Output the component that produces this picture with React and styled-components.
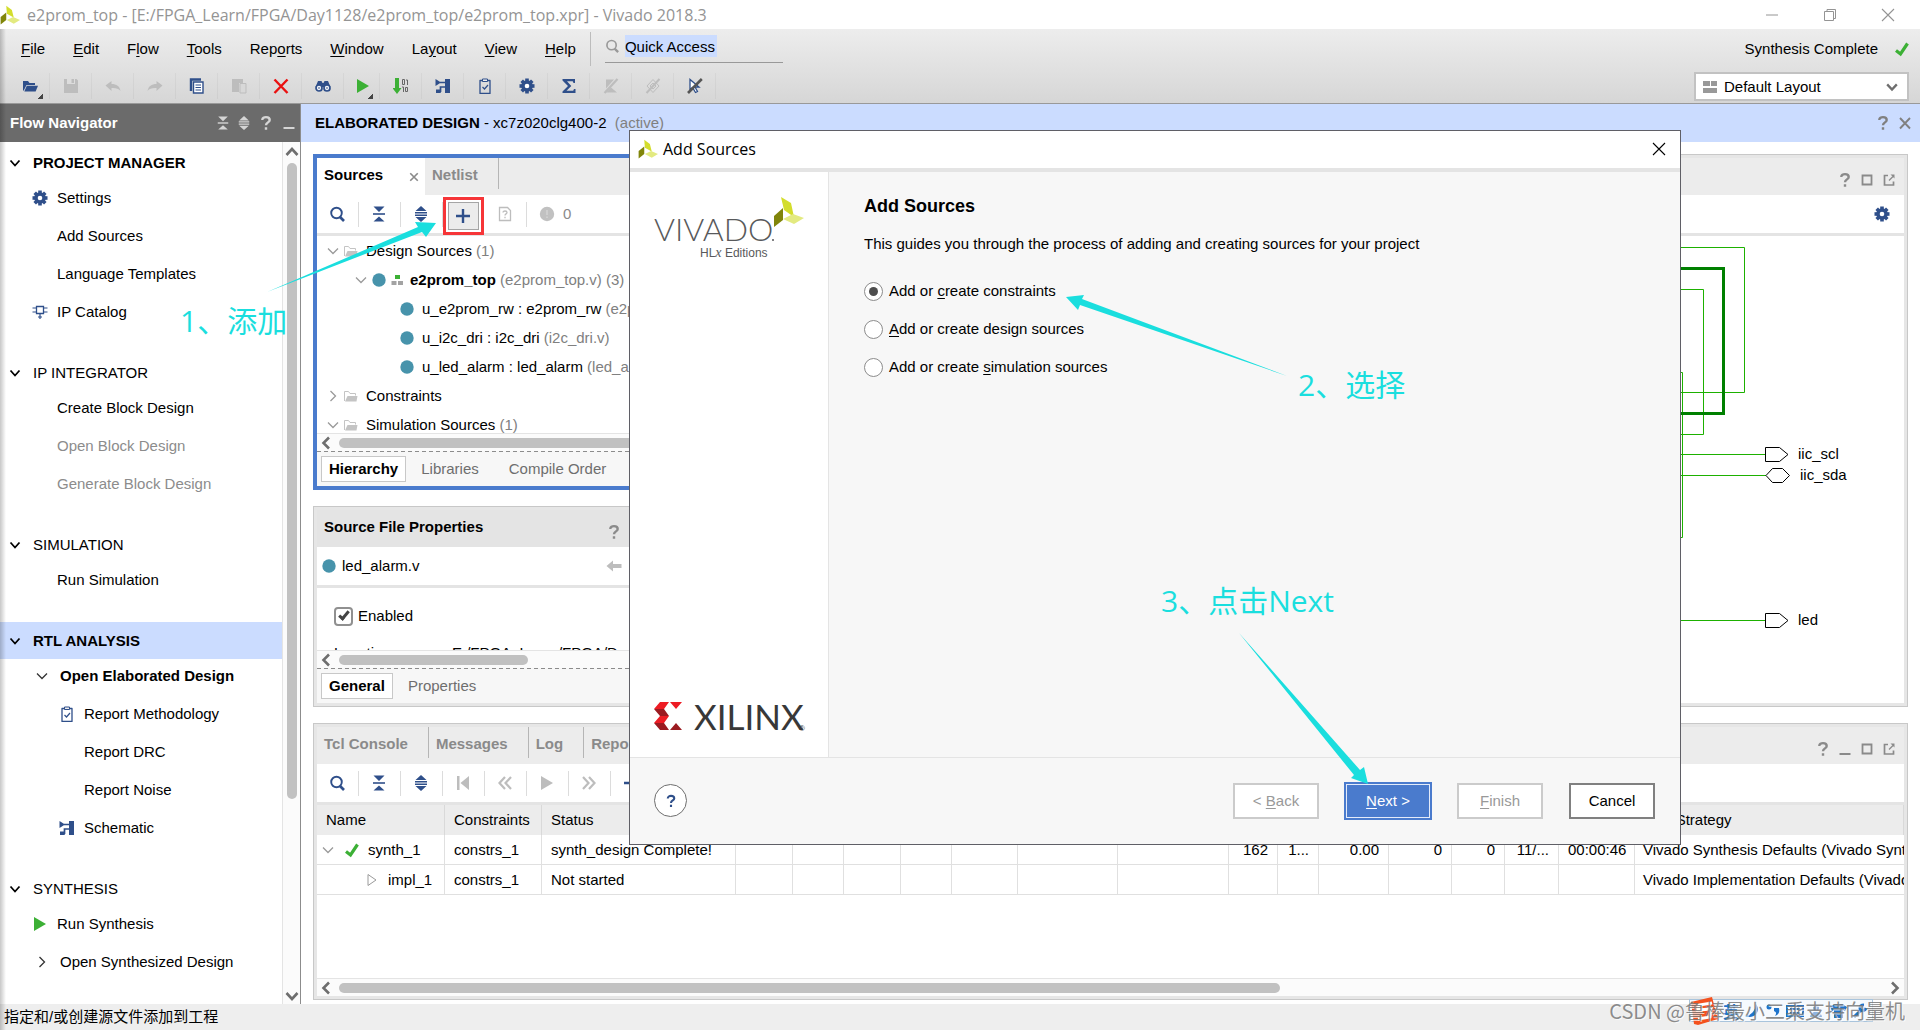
import React from "react";
import styled, { createGlobalStyle, css } from "styled-components";

const color = {
  navy: "#2f4f8a",
  gray: "#9a9a9a",
  pale: "#bdbdbd",
  line: "#e4e4e4",
  bar: "#ececec",
  teal: "#4793ab",
  focus: "#4a7bcd",
  select: "#cbdcff",
  green: "#3cb035",
  note: "#1adede",
};

const GlobalStyle = createGlobalStyle`
  *, *::before, *::after { box-sizing: border-box; }
  body {
    margin: 0;
    background: #fff;
    color: #000;
    font: 15px/20px "Liberation Sans", "Noto Sans CJK SC", sans-serif;
  }
  button, input, select { font: inherit; color: inherit; margin: 0; }
  button { background: none; border: 0; padding: 0; text-align: left; white-space: nowrap; }
  ul { list-style: none; margin: 0; padding: 0; }
  h1, h2, p { margin: 0; font-size: inherit; }
  svg { display: block; flex: none; }
`;

/* ---------- icons ---------- */

const glyphs = {
  open: (
    <>
      <path d="M1 13V3h5l1.500 2H13v2H4.500L2 12z" fill="currentColor" />
      <path d="M4.800 7.800H16L13.600 13.500H2.300z" fill="currentColor" />
    </>
  ),
  save: <path fill="currentColor" fillRule="evenodd" d="M1 1h3v5h8V1h1.500L15 2.500V15H1zM8.500 1H11v4H8.500z" />,
  undo: <path fill="currentColor" d="M0.500 7.500 6.500 3v3c5 0 8 2 9 7-2-2.500-4.500-3.200-9-3v3z" />,
  redo: <path fill="currentColor" d="M15.500 7.500 9.500 3v3c-5 0-8 2-9 7 2-2.500 4.500-3.200 9-3v3z" />,
  copy: (
    <>
      <path d="M2 13V1.500h10" fill="none" stroke="currentColor" strokeWidth="2.400" />
      <path d="M4.500 4h9.500v11H4.500z" fill="#fff" stroke="currentColor" strokeWidth="1.400" />
      <path d="M6.500 7h5.500M6.500 9.500h5.500M6.500 12h5.500" stroke="currentColor" strokeWidth="1.200" />
    </>
  ),
  paste: (
    <>
      <path d="M1 1h11v4H8v9H1z" fill="currentColor" />
      <path d="M9 5.500h6v9.500H9z" fill="#d8d8d8" stroke="currentColor" />
    </>
  ),
  remove: <path d="M1.500 1.500 14.500 15M14.500 1.500 1.500 15" stroke="#ea1111" strokeWidth="2.400" fill="none" />,
  find: (
    <>
      <path fill="currentColor" d="M3 3h3.500l1 2h1l1-2H13l2.500 6h-15z" />
      <circle cx="4" cy="10" r="3" fill="#fff" stroke="currentColor" strokeWidth="1.700" />
      <circle cx="12" cy="10" r="3" fill="#fff" stroke="currentColor" strokeWidth="1.700" />
      <circle cx="4" cy="10" r="1.300" fill="currentColor" opacity=".5" />
      <circle cx="12" cy="10" r="1.300" fill="currentColor" opacity=".5" />
    </>
  ),
  play: <path fill="currentColor" d="M2 1 14 8 2 15z" />,
  playOutline: <path fill="none" stroke="currentColor" d="M4 2.500 12 8l-8 5.500z" />,
  bits: (
    <>
      <path d="M2 0h4v10h2.500L4 16-.500 10H2z" fill={color.green} />
      <path
        fill="none"
        stroke="#666"
        d="M9.500 1.500h2v5h-2zM13 2h1.500v5M9 9h1.500v5M12.500 9.500h2v4h-2z"
      />
    </>
  ),
  schematic: (
    <>
      <path fill="currentColor" d="M.500 1 6 4.500 .500 8zM10 1h5v14h-5z" />
      <path fill="none" stroke="currentColor" strokeWidth="1.700" d="M5 4.500h6M10 9H5.500v5M1 14h5" />
      <path fill="currentColor" d="M1 11.500h4V15H1z" />
    </>
  ),
  clipboard: (
    <>
      <path d="M3 2.500h10v13H3z" fill="none" stroke="currentColor" strokeWidth="1.300" strokeLinejoin="round" />
      <path d="M5.500 1h5v2.500h-5z" fill="#eee" stroke="currentColor" />
      <path d="m5.500 9 2 2 3.500-4" fill="none" stroke="currentColor" strokeWidth="1.200" />
    </>
  ),
  gear: (
    <>
      <g fill="currentColor">
        <circle cx="8" cy="8" r="5.800" />
        {[0, 45, 90, 135].map((a) => (
          <rect key={a} x="6.200" y="0.500" width="3.600" height="15" transform={`rotate(${a} 8 8)`} />
        ))}
      </g>
      <circle cx="8" cy="8" r="2.300" fill="#fff" />
    </>
  ),
  sigma: <path fill="currentColor" d="M1.500 1H14v4h-1.500l-.800-1.800H6L10.300 8 5.500 12.800h6.700L13 11h1.500v4h-13v-1.500L7 8 1.500 2.600z" />,
  flagOff: (
    <>
      <path fill="currentColor" d="M3 1.500h8L3 10.500zM8 9.500l6 5H3z" />
      <path d="M1.500 15 14.500 1" stroke="currentColor" strokeWidth="2.200" />
    </>
  ),
  layerOff: (
    <>
      <path d="M8 1.500 14 8l-6 6.500L2 8zM8 5l3 3-3 3-3-3z" fill="none" stroke="currentColor" />
      <path d="M1.500 15 14.500 1" stroke="currentColor" strokeWidth="2" />
    </>
  ),
  cursorOff: (
    <>
      <path d="M3 1.500v10l2.500-2 3 5 2-1-2.500-4.500H12z" fill="#fff" stroke={color.navy} strokeWidth="1.300" />
      <path d="M1 15 14.800 1" stroke="#555" strokeWidth="2.600" />
    </>
  ),
  search: (
    <>
      <circle cx="7.500" cy="7" r="5.300" fill="none" stroke="currentColor" strokeWidth="1.900" />
      <path d="m11 11 4 4" stroke="currentColor" strokeWidth="2.600" />
    </>
  ),
  collapse: (
    <>
      <path fill="currentColor" d="M2.500 0.500h11L8 6zM2.500 15.500h11L8 10.500z" />
      <path d="M2 8h12" stroke="currentColor" strokeWidth="1.600" />
    </>
  ),
  expand: (
    <>
      <path fill="currentColor" d="M2.500 5h11L8 0zM2.500 11h11L8 16z" />
      <path d="M2 6.800h12M2 9.300h12" stroke="currentColor" strokeWidth="1.400" />
    </>
  ),
  plus: <path d="M8 1v14M1 8h14" stroke="currentColor" strokeWidth="2.400" />,
  help: <path fill="none" stroke="currentColor" strokeWidth="2.400" d="M4.300 5C4.300 1.200 11.700 1.200 11.700 5 11.700 7.500 8 7.300 8 10.300M8 12.200V14.800" />,
  fileHelp: (
    <>
      <path d="M2.500 1.500h8l3 3v10h-11z" fill="none" stroke="currentColor" strokeWidth="1.300" />
      <path d="M6 6.500c0-2 4-2 4 0 0 1.400-2 1.400-2 3M8 10.800V12.300" fill="none" stroke="currentColor" strokeWidth="1.300" />
    </>
  ),
  warn: (
    <>
      <circle cx="8" cy="8" r="7.200" fill="currentColor" />
      <path d="M8 4v5M8 10.500V12" stroke="#d4d4d4" strokeWidth="1.500" />
    </>
  ),
  minimize: <path d="M2.500 13h11" stroke="currentColor" strokeWidth="2" />,
  maximize: <path d="M3.500 3.500h9v9h-9z" fill="none" stroke="currentColor" strokeWidth="1.800" />,
  float: (
    <>
      <path d="M7 3.500H3.500v9.500h9V9.500" fill="none" stroke="currentColor" strokeWidth="1.700" />
      <path d="M9.500 2.500H13.500V6.500z" fill="currentColor" />
      <path d="m8 8.500 4-4" stroke="currentColor" strokeWidth="1.300" />
    </>
  ),
  close: <path d="m3 3 10 10.500M13 3 3 13.500" stroke="currentColor" strokeWidth="1.900" />,
  tabClose: <path d="m2 2 12 12M14 2 2 14" stroke="currentColor" strokeWidth="2.600" />,
  thinClose: <path d="m2 2 12 12M14 2 2 14" stroke="currentColor" strokeWidth="1.100" />,
  thinMin: <path d="M2 8h12" stroke="currentColor" />,
  restore: <path d="M2.500 4.500h9v9h-9zM5 4V2.500h8.500v9H12" fill="none" stroke="currentColor" />,
  down: <path d="m3.500 5.500 4.500 5 4.500-5" fill="none" stroke="currentColor" strokeWidth="1.800" />,
  downThin: <path d="m3 5.500 5 5 5-5" fill="none" stroke="currentColor" strokeWidth="1.300" />,
  rightThin: <path d="m5.500 3 5 5-5 5" fill="none" stroke="currentColor" strokeWidth="1.300" />,
  up: <path d="m2.500 11 5.500-6 5.500 6" fill="none" stroke="currentColor" strokeWidth="2.600" />,
  downBold: <path d="m2.500 5 5.500 6 5.500-6" fill="none" stroke="currentColor" strokeWidth="2.600" />,
  leftBold: <path d="m11 2.500-5.500 5.500 5.500 5.500" fill="none" stroke="currentColor" strokeWidth="2.600" />,
  rightBold: <path d="m5 2.500 5.500 5.500-5.500 5.500" fill="none" stroke="currentColor" strokeWidth="2.600" />,
  folder: (
    <g color="#c4c4c4">
      <path d="M1.500 13V3.500h4l1.500 2h5.500v2" fill="none" stroke="currentColor" />
      <path d="M4.500 8H14.500l-1 5.500H2z" fill="currentColor" />
    </g>
  ),
  dot: <circle cx="8" cy="8" r="6.700" fill={color.teal} />,
  hierarchy: (
    <>
      <path fill={color.green} d="M6 3h5v4H6z" />
      <path fill="#a3a3a3" d="M2.500 9h5v4h-5zM9 9h5v4H9z" />
    </>
  ),
  check: <path d="M2 9.500 6.500 13 13.500 2.500" fill="none" stroke={color.green} strokeWidth="3.200" />,
  chip: (
    <>
      <path d="M4.500 2.500h7v7h-7z" fill="none" stroke="currentColor" strokeWidth="1.300" />
      <path d="M.500 4h4M.500 8h4M11.500 4h4M11.500 8h4M8 9.500V15M6 13h4" stroke="currentColor" strokeWidth="1.200" />
    </>
  ),
  first: <path fill="currentColor" d="M2 1h2.500v14H2zM14 1v14L5.500 8z" />,
  back: <path d="M8 2 2.500 8 8 14M14 2 8.500 8l5.500 6" fill="none" stroke="currentColor" strokeWidth="2.200" />,
  forward: <path d="m2 2 5.500 6L2 14M8 2l5.500 6L8 14" fill="none" stroke="currentColor" strokeWidth="2.200" />,
  arrowLeft: <path fill="currentColor" d="M.500 8 7 2.500V6h8.500v4H7v3.500z" />,
  layout: <path fill="#999" d="M1 2h7v5H1zM9 2h6v5H9zM1 9h14v5H1z" />,
  vivado: (
    <>
      <path fill="#d3dd2c" d="M5 .500 9.500 4l1.500 6-5.500-3z" />
      <path fill="#80850a" d="M5 6v6L.500 15.500V9.500z" />
      <path fill="#e3ea80" d="m5.500 12 5-2.500 5.500 2.500-5 3z" />
    </>
  ),
};

const Icon = ({ name, size = 16, tone }) => (
  <svg width={size} height={size} viewBox="0 0 16 16" color={tone} aria-hidden="true">
    {glyphs[name]}
  </svg>
);

/* ---------- window frame ---------- */

const Window = styled.div`
  position: relative;
  display: flex;
  flex-direction: column;
  height: 100vh;
  min-height: 900px;
  overflow: hidden;
  &::after {
    content: "";
    position: absolute;
    inset: 29px auto 0 0;
    width: 6px;
    background: linear-gradient(to right, rgba(0, 0, 0, 0.22), transparent);
    pointer-events: none;
  }
`;

const TitleBar = styled.header`
  display: flex;
  align-items: center;
  height: 29px;
  padding-right: 24px;
  gap: 7px;
  color: #949494;
  font: 16px/20px "Open Sans", sans-serif;
`;

const TitleText = styled.span`
  flex: 1;
`;

const WindowButtons = styled.div`
  display: flex;
  gap: 42px;
`;

const Chrome = styled.div`
  display: flex;
  justify-content: space-between;
  height: 75px;
  background: linear-gradient(#ededed, #d6d6d6);
  border-bottom: 1px solid #999;
`;

const ChromeColumn = styled.div`
  display: flex;
  flex-direction: column;
`;

const MenuBar = styled.nav`
  display: flex;
  align-items: center;
  height: 40px;
  padding-left: 7px;
`;

const MenuButton = styled.button`
  padding: 0 14px;
`;

const Key = styled.u`
  text-underline-offset: 2px;
`;

const QuickAccess = styled.label`
  display: flex;
  align-items: center;
  width: 193px;
  height: 34px;
  padding-left: 14px;
  border-left: 1px solid #bcbcbc;
`;

const QuickBox = styled.span`
  display: flex;
  align-items: flex-start;
  gap: 6px;
  flex: 1;
  height: 28px;
  border-bottom: 1px solid #999;
  svg { margin-top: 4px; }
`;

const QuickInput = styled.input`
  width: 92px;
  height: 22px;
  padding: 0;
  border: 0;
  background: ${color.select};
`;

const ToolBar = styled.div`
  display: flex;
  align-items: center;
  height: 34px;
  padding-left: 8px;
`;

const Tool = styled.button`
  position: relative;
  display: grid;
  place-items: center;
  width: ${(p) => (p.$tight ? 36 : 42)}px;
  height: 26px;
  border-right: 1px solid rgba(0, 0, 0, 0.04);
  color: ${(p) => p.$tone || color.navy};
  ${(p) =>
    p.$menu &&
    css`
      padding-left: 3px;
      &::after {
        content: "";
        position: absolute;
        right: 6px;
        bottom: 0;
        width: 5px;
        height: 5px;
        background: linear-gradient(135deg, transparent 50%, #444 50%);
      }
    `}
`;

const RunStatus = styled.div`
  display: flex;
  align-items: center;
  justify-content: flex-end;
  gap: 16px;
  height: 40px;
  padding-right: 10px;
`;

const LayoutPicker = styled.label`
  display: flex;
  align-items: center;
  gap: 6px;
  width: 215px;
  height: 29px;
  margin: 3px 11px 0 0;
  padding: 0 8px 0 6px;
  border: 2px solid #c2c2c2;
  background: #fff;
`;

const LayoutSelect = styled.select`
  flex: 1;
  appearance: none;
  border: 0;
  padding: 0;
  background: none;
`;

const Workspace = styled.div`
  flex: 1;
  display: flex;
  min-height: 0;
`;

const StatusBar = styled.footer`
  height: 26px;
  padding: 3px 4px;
  background: #eee;
`;

/* ---------- flow navigator ---------- */

const Navigator = styled.aside`
  display: flex;
  flex-direction: column;
  width: 301px;
  border-right: 1px solid #8c8c8c;
`;

const NavigatorHeader = styled.div`
  display: flex;
  align-items: center;
  gap: 7px;
  height: 38px;
  padding: 0 3px 0 10px;
  background: #6b6b6b;
  color: #fff;
`;

const NavigatorTitle = styled.h2`
  flex: 1;
  font-weight: bold;
`;

const NavigatorBody = styled.div`
  flex: 1;
  display: flex;
  min-height: 0;
`;

const FlowList = styled.div`
  flex: 1;
  display: flex;
  flex-direction: column;
  gap: 25px;
  padding-top: 2px;
  overflow: hidden;
`;

const FlowHeading = styled.button`
  display: flex;
  align-items: center;
  gap: 10px;
  width: 100%;
  height: 37px;
  padding-left: 7px;
  background: ${(p) => (p.$selected ? color.select : "none")};
  font-weight: ${(p) => (p.$bold ? "bold" : "normal")};
`;

const FlowItems = styled.ul`
  display: flex;
  flex-direction: column;
  gap: 4px;
`;

const FlowItem = styled.button`
  display: flex;
  align-items: center;
  gap: ${(p) => (p.$branch ? 10 : 9)}px;
  width: 100%;
  height: 34px;
  padding-left: ${(p) => (p.$branch ? 34 : p.$deep ? 59 : 32)}px;
  color: ${(p) => (p.disabled ? "#8c8c8c" : "#000")};
  font-weight: ${(p) => (p.$bold ? "bold" : "normal")};
`;

const IconSlot = styled.span`
  flex: none;
  width: 16px;
  height: 16px;
`;

const VScroll = styled.div`
  display: flex;
  flex-direction: column;
  align-items: center;
  width: 18px;
  padding-top: 2px;
  border-left: 1px solid ${color.line};
  background: #fbfbfb;
`;

const VThumb = styled.div`
  flex: 0 1 74%;
  width: 10px;
  margin: 3px 0 auto;
  border-radius: 5px;
  background: #c1c1c1;
`;

/* ---------- main area ---------- */

const Main = styled.main`
  flex: 1;
  display: flex;
  flex-direction: column;
  min-width: 0;
`;

const DesignBar = styled.div`
  display: flex;
  align-items: center;
  gap: 6px;
  height: 38px;
  padding: 0 7px 0 14px;
  background: ${color.select};
`;

const DesignName = styled.h1`
  flex: 1;
  font-weight: normal;
`;

const Muted = styled.span`
  color: #808080;
`;

const Panes = styled.div`
  flex: 1;
  display: flex;
  flex-direction: column;
  gap: 16px;
  min-height: 0;
  padding: 12px 12px 4px;
`;

const UpperPanes = styled.div`
  display: grid;
  grid-template: 336px 201px / 408px minmax(0, 1fr);
  gap: 16px;
`;

const Panel = styled.section`
  display: flex;
  flex-direction: column;
  min-width: 0;
  min-height: 0;
  ${(p) => p.$tall && "grid-area: 1 / 2 / 3 / 3;"}
  ${(p) => p.$fill && "flex: 1;"}
  border: ${(p) => (p.$active ? `4px solid ${color.focus}` : "1px solid #c8c8c8")};
  padding: ${(p) => (p.$active ? 0 : 3)}px;
  background: linear-gradient(#fff, #fff) content-box, #e6e6e6;
`;

const PanelHeader = styled.div`
  display: flex;
  justify-content: space-between;
  flex: none;
  height: 37px;
  background: ${(p) => (p.$plain ? "#e4e4e4" : color.bar)};
`;

const PanelTitle = styled.h2`
  padding: 7px 7px 0;
  font-weight: bold;
`;

const PanelTabs = styled.div`
  display: flex;
`;

const PanelTab = styled.button`
  display: flex;
  align-items: center;
  justify-content: space-between;
  width: ${(p) => (p.$active ? "108px" : "auto")};
  height: ${(p) => (p.$active ? 37 : 31)}px;
  padding: ${(p) => (p.$active ? "0 6px 3px 7px" : "3px 20px 0 7px")};
  border-right: ${(p) => (p.$active ? 0 : 1)}px solid #b5b5b5;
  background: ${(p) => (p.$active ? "#fff" : "none")};
  color: ${(p) => (p.$active ? "#000" : "#8a8a8a")};
  font-weight: bold;
  svg { margin-top: 4px; }
`;

const HeaderIcons = styled.div`
  display: flex;
  align-items: center;
  gap: 6px;
  padding: 6px 7px 0 0;
  color: #8a8a8a;
`;

const PanelTools = styled.div`
  display: flex;
  align-items: center;
  flex: none;
  height: 41px;
  border-bottom: 3px solid ${color.line};
`;

const PanelTool = styled.button`
  display: grid;
  place-items: center;
  width: 42px;
  height: 25px;
  padding-right: 1px;
  border-right: 1px solid ${(p) => (p.$last ? "transparent" : "#dcdcdc")};
  color: ${(p) => (p.$off ? color.pale : color.navy)};
`;

const AddTool = styled.span`
  display: grid;
  place-items: center;
  width: 31px;
  height: 28px;
  border: 1px solid #a5a5a5;
  background: #ececec;
  outline: 3px solid #f63538;
  outline-offset: 2px;
`;

const Counter = styled.span`
  display: flex;
  align-items: center;
  gap: 8px;
  padding-left: 12px;
  color: #8a8a8a;
`;

const Spacer = styled.span`
  flex: 1;
`;

const Tree = styled.ul`
  flex: 1;
  min-height: 0;
  overflow: hidden;
`;

const TreeRow = styled.li`
  display: flex;
  align-items: center;
  gap: 2px;
  height: 29px;
  padding-left: ${(p) => p.$indent}px;
  white-space: nowrap;
  color: ${color.gray};
`;

const TreeLabel = styled.span`
  margin-left: ${(p) => (p.$close ? 3 : 5)}px;
  color: #000;
`;

const HScroll = styled.div`
  display: flex;
  align-items: center;
  flex: none;
  height: 18px;
  padding: 0 1px;
  border-top: 1px solid ${color.line};
  background: #fbfbfb;
  color: #6e6e6e;
`;

const HTrack = styled.div`
  flex: 1;
  margin: 0 5px;
`;

const HThumb = styled.div`
  width: ${(p) => p.$share}%;
  height: 10px;
  border-radius: 5px;
  background: #c1c1c1;
`;

const ViewTabs = styled.div`
  display: flex;
  align-items: center;
  flex: none;
  height: 35px;
  padding: 0 4px;
  background: repeating-linear-gradient(to right, #8c8c8c 0 4px, transparent 4px 7px) top / 100% 1px no-repeat, #f7f7f7;
`;

const ViewTab = styled.button`
  height: 26px;
  padding: ${(p) => (p.$active ? "0 7px" : "0 15px")};
  border: ${(p) => (p.$active ? "1px solid #c8c8c8" : "0")};
  background: ${(p) => (p.$active ? "#fff" : "none")};
  color: ${(p) => (p.$active ? "#000" : "#6e6e6e")};
  font-weight: ${(p) => (p.$active ? "bold" : "normal")};
`;

const FileRow = styled.div`
  display: flex;
  align-items: center;
  gap: 5px;
  flex: none;
  height: 41px;
  padding: 0 15px 0 4px;
  border-bottom: 3px solid ${color.line};
`;

const FileActions = styled.div`
  display: flex;
  gap: 24px;
  margin-left: auto;
`;

const Properties = styled.div`
  flex: 1;
  min-height: 0;
  overflow: hidden;
  padding: 18px 16px 0 17px;
`;

const CheckLabel = styled.label`
  display: flex;
  align-items: center;
  gap: 5px;
`;

const CheckBox = styled.input`
  appearance: none;
  display: grid;
  place-items: center;
  width: 19px;
  height: 19px;
  border: 2px solid #909090;
  border-radius: 4px;
  background: #fff;
  &:checked::before {
    content: "";
    width: 6px;
    height: 11px;
    margin-bottom: 3px;
    border: solid #444;
    border-width: 0 3px 3px 0;
    transform: rotate(40deg);
  }
`;

const Property = styled.div`
  display: grid;
  grid-template-columns: 118px 1fr;
  margin-top: 17px;
  white-space: nowrap;
`;

const Canvas = styled.div`
  flex: 1;
  display: flex;
  justify-content: flex-end;
  min-height: 0;
  padding-top: 1px;
  overflow: hidden;
`;

const RunsArea = styled.div`
  flex: 1;
  min-height: 0;
  overflow: hidden;
`;

const RunsTable = styled.table`
  width: 100%;
  table-layout: fixed;
  border-collapse: separate;
  border-spacing: 0;
`;

const HeadCell = styled.th`
  height: 30px;
  padding: 0 9px;
  overflow: hidden;
  white-space: nowrap;
  background: ${color.bar};
  border-right: 1px solid #d9d9d9;
  text-align: left;
  font-weight: normal;
`;

const Cell = styled.td`
  height: 30px;
  padding: 0 9px;
  overflow: hidden;
  white-space: nowrap;
  border: solid #e0e0e0;
  border-width: 0 1px 1px 0;
  text-align: ${(p) => (p.$num ? "right" : "left")};
  &:last-child { border-right: 0; padding: 0 0 0 8px; }
`;

const RunName = styled.span`
  display: flex;
  align-items: center;
  gap: 8px;
  margin-left: -6px;
  padding-left: ${(p) => p.$indent}px;
  color: ${color.gray};
`;

const RunText = styled.span`
  color: #000;
`;

/* ---------- dialog ---------- */

const Dialog = styled.section`
  position: absolute;
  left: 629px;
  top: 130px;
  display: flex;
  flex-direction: column;
  width: 1052px;
  height: 715px;
  border: 1px solid #5f5f66;
  background: #f7f7f7;
`;

const DialogTitle = styled.div`
  display: flex;
  align-items: center;
  gap: 5px;
  height: 41px;
  padding: 0 13px 1px 8px;
  border-bottom: 4px solid ${color.line};
  background: #fff;
  font: 16px/20px "Open Sans", sans-serif;
`;

const DialogBody = styled.div`
  flex: 1;
  display: flex;
`;

const Branding = styled.div`
  display: flex;
  flex-direction: column;
  justify-content: space-between;
  width: 199px;
  padding: 23px 0 19px 24px;
  border-right: 1px solid ${color.line};
  background: #fff;
`;

const Steps = styled.form`
  display: flex;
  flex-direction: column;
  padding: 23px 35px;
`;

const StepsTitle = styled.h2`
  margin-bottom: 17px;
  font-size: 18px;
  line-height: 22px;
`;

const Intro = styled.p`
  margin-bottom: 27px;
`;

const Choices = styled.div`
  display: flex;
  flex-direction: column;
  gap: 18px;
`;

const Choice = styled.label`
  display: flex;
  align-items: center;
  gap: 6px;
`;

const Radio = styled.input`
  appearance: none;
  display: grid;
  place-items: center;
  width: 19px;
  height: 19px;
  border: 1px solid #8c8c8c;
  border-radius: 50%;
  background: #fff;
  &:checked::before {
    content: "";
    width: 9px;
    height: 9px;
    border-radius: 50%;
    background: #4d4d4d;
  }
`;

const DialogFooter = styled.div`
  display: flex;
  align-items: center;
  gap: 26px;
  height: 87px;
  padding: 0 25px 1px 24px;
  border-top: 1px solid ${color.line};
`;

const HelpButton = styled.button`
  display: grid;
  place-items: center;
  width: 33px;
  height: 33px;
  margin-right: auto;
  border: 1px solid #6e6e6e;
  border-radius: 50%;
  background: #fff;
  color: ${color.navy};
`;

const Action = styled.button`
  width: 86px;
  height: 36px;
  border: ${(p) => (p.$strong ? "2px solid #808080" : "2px solid #cbcbcb")};
  background: #fff;
  color: ${(p) => (p.disabled ? "#999" : "#000")};
  text-align: center;
  ${(p) =>
    p.$primary &&
    css`
      border: 1px solid #e3ebfa;
      outline: 2px solid ${color.focus};
      background: ${color.focus};
      color: #fff;
      margin: 0 1px;
      width: 84px;
      height: 34px;
    `}
`;

/* ---------- overlays ---------- */

const Arrows = styled.svg`
  position: absolute;
  left: 0;
  top: 0;
  pointer-events: none;
`;

const Note = styled.span`
  position: absolute;
  left: ${(p) => p.$x}px;
  top: ${(p) => p.$y}px;
  color: ${color.note};
  font: 30px/40px "Open Sans", "Noto Sans CJK SC", sans-serif;
  white-space: nowrap;
`;

const ImeBar = styled.div`
  position: absolute;
  right: 47px;
  bottom: 8px;
  display: flex;
  align-items: center;
  gap: 5px;
  height: 23px;
  padding-right: 4px;
  border: 1px solid #a9c4dc;
  background: #f6fafe;
  color: #1e74cc;
  font: bold 16px/20px "Noto Sans CJK SC", sans-serif;
`;

const Watermark = styled.span`
  position: absolute;
  right: 15px;
  bottom: 5px;
  color: rgba(120, 120, 120, 0.85);
  font: 20px/28px "Noto Sans CJK SC", sans-serif;
  text-shadow: 1px 1px 0 rgba(255, 255, 255, 0.7);
`;

/* ---------- data ---------- */

const menus = [
  ["", "F", "ile"], ["", "E", "dit"], ["F", "l", "ow"], ["", "T", "ools"], ["Rep", "o", "rts"],
  ["", "W", "indow"], ["La", "y", "out"], ["", "V", "iew"], ["", "H", "elp"],
];

const tools = [
  { name: "open", menu: true }, { name: "save", tone: color.pale }, { name: "undo", tone: color.pale },
  { name: "redo", tone: color.pale }, { name: "copy" }, { name: "paste", tone: color.pale }, { name: "remove" },
  { name: "find" }, { name: "play", tone: color.green, menu: true, tight: true }, { name: "bits" },
  { name: "schematic" }, { name: "clipboard" }, { name: "gear" }, { name: "sigma" },
  { name: "flagOff", tone: color.pale }, { name: "layerOff", tone: color.pale }, { name: "cursorOff" },
];

const flow = [
  { title: "PROJECT MANAGER", bold: true, items: [
    { text: "Settings", icon: "gear" }, { text: "Add Sources" }, { text: "Language Templates" }, { text: "IP Catalog", icon: "chip" },
  ] },
  { title: "IP INTEGRATOR", items: [
    { text: "Create Block Design" }, { text: "Open Block Design", off: true }, { text: "Generate Block Design", off: true },
  ] },
  { title: "SIMULATION", items: [{ text: "Run Simulation" }] },
  { title: "RTL ANALYSIS", bold: true, selected: true, items: [
    { text: "Open Elaborated Design", bold: true, branch: "downThin" },
    { text: "Report Methodology", icon: "clipboard", deep: true }, { text: "Report DRC", deep: true },
    { text: "Report Noise", deep: true }, { text: "Schematic", icon: "schematic", deep: true },
  ] },
  { title: "SYNTHESIS", items: [
    { text: "Run Synthesis", icon: "play", tone: color.green }, { text: "Open Synthesized Design", branch: "rightThin" },
  ] },
];

const sources = [
  { indent: 8, icons: ["downThin", "folder"], text: "Design Sources", extra: "(1)" },
  { indent: 36, icons: ["downThin", "dot", "hierarchy"], text: <b>e2prom_top</b>, extra: "(e2prom_top.v) (3)", close: true },
  { indent: 82, icons: ["dot"], text: "u_e2prom_rw : e2prom_rw", extra: "(e2prom_rw.v)" },
  { indent: 82, icons: ["dot"], text: "u_i2c_dri : i2c_dri", extra: "(i2c_dri.v)" },
  { indent: 82, icons: ["dot"], text: "u_led_alarm : led_alarm", extra: "(led_alarm.v)" },
  { indent: 8, icons: ["rightThin", "folder"], text: "Constraints" },
  { indent: 8, icons: ["downThin", "folder"], text: "Simulation Sources", extra: "(1)" },
];

const columns = [
  ["Name", 128], ["Constraints", 97], ["Status", 194], ["", 57], ["", 51], ["", 57], ["", 51], ["", 66],
  ["", 100], ["", 111], ["", 49], ["", 41], ["", 70], ["", 63], ["", 53], ["", 54], ["", 76], ["Run Strategy", null],
];

const runs = [
  { name: "synth_1", indent: 0, icons: ["downThin", "check"], cells: [
    "constrs_1", "synth_design Complete!", "", "", "", "", "", "", "", "162", "1...", "0.00", "0", "0", "11/...", "00:00:46",
    "Vivado Synthesis Defaults (Vivado Synthesis 2018)",
  ] },
  { name: "impl_1", indent: 44, icons: ["playOutline"], cells: [
    "constrs_1", "Not started", "", "", "", "", "", "", "", "", "", "", "", "", "", "",
    "Vivado Implementation Defaults (Vivado Implementation 2018)",
  ] },
];

/* ---------- parts ---------- */

const Scrollbar = ({ share }) => (
  <HScroll>
    <Icon name="leftBold" />
    <HTrack><HThumb $share={share} /></HTrack>
    <Icon name="rightBold" />
  </HScroll>
);

const FlowNavigator = () => (
  <Navigator>
    <NavigatorHeader>
      <NavigatorTitle>Flow Navigator</NavigatorTitle>
      <Icon name="collapse" size={14} tone="#d5d5d5" />
      <Icon name="expand" size={14} tone="#d5d5d5" />
      <Icon name="help" tone="#d5d5d5" />
      <Icon name="minimize" tone="#d5d5d5" />
    </NavigatorHeader>
    <NavigatorBody>
      <FlowList>
        {flow.map((s) => (
          <div key={s.title}>
            <FlowHeading $bold={s.bold} $selected={s.selected}>
              <Icon name="down" />
              {s.title}
            </FlowHeading>
            <FlowItems>
              {s.items.map((i) => (
                <li key={i.text}>
                  <FlowItem disabled={i.off} $bold={i.bold} $branch={i.branch} $deep={i.deep}>
                    <IconSlot>
                      {(i.icon || i.branch) && (
                        <Icon name={i.icon || i.branch} tone={i.tone || (i.branch ? "#333" : color.navy)} />
                      )}
                    </IconSlot>
                    {i.text}
                  </FlowItem>
                </li>
              ))}
            </FlowItems>
          </div>
        ))}
      </FlowList>
      <VScroll>
        <Icon name="up" tone="#6e6e6e" />
        <VThumb />
        <Icon name="downBold" tone="#6e6e6e" />
      </VScroll>
    </NavigatorBody>
  </Navigator>
);

const SourcesPanel = () => (
  <Panel $active>
    <PanelHeader>
      <PanelTabs>
        <PanelTab $active>Sources <Icon name="tabClose" size={10} tone="#8a8a8a" /></PanelTab>
        <PanelTab>Netlist</PanelTab>
      </PanelTabs>
    </PanelHeader>
    <PanelTools>
      <PanelTool aria-label="Search"><Icon name="search" /></PanelTool>
      <PanelTool aria-label="Collapse all"><Icon name="collapse" /></PanelTool>
      <PanelTool aria-label="Expand all"><Icon name="expand" /></PanelTool>
      <PanelTool $last aria-label="Add sources"><AddTool><Icon name="plus" /></AddTool></PanelTool>
      <PanelTool $off aria-label="File info"><Icon name="fileHelp" /></PanelTool>
      <Counter><Icon name="warn" tone="#c1c1c1" />0</Counter>
    </PanelTools>
    <Tree>
      {sources.map((r, n) => (
        <TreeRow key={n} $indent={r.indent}>
          {r.icons.map((i) => <Icon key={i} name={i} />)}
          <TreeLabel $close={r.close}>{r.text} <Muted>{r.extra}</Muted></TreeLabel>
        </TreeRow>
      ))}
    </Tree>
    <Scrollbar share={90} />
    <ViewTabs>
      <ViewTab $active>Hierarchy</ViewTab>
      <ViewTab>Libraries</ViewTab>
      <ViewTab>Compile Order</ViewTab>
    </ViewTabs>
  </Panel>
);

const PropertiesPanel = () => (
  <Panel>
    <PanelHeader $plain>
      <PanelTitle>Source File Properties</PanelTitle>
      <HeaderIcons>
        <Icon name="help" /><Icon name="minimize" /><Icon name="maximize" /><Icon name="float" /><Icon name="close" />
      </HeaderIcons>
    </PanelHeader>
    <FileRow>
      <Icon name="dot" />
      led_alarm.v
      <FileActions>
        <Icon name="arrowLeft" tone={color.pale} />
        <Icon name="gear" tone={color.navy} />
        <Icon name="gear" tone={color.navy} />
      </FileActions>
    </FileRow>
    <Properties>
      <CheckLabel><CheckBox type="checkbox" defaultChecked />Enabled</CheckLabel>
      <Property><span>Location:</span><span>E:/FPGA_Learn/FPGA/Day1128</span></Property>
    </Properties>
    <Scrollbar share={53} />
    <ViewTabs>
      <ViewTab $active>General</ViewTab>
      <ViewTab>Properties</ViewTab>
    </ViewTabs>
  </Panel>
);

const SchematicPanel = () => (
  <Panel $tall>
    <PanelHeader>
      <Spacer />
      <HeaderIcons><Icon name="help" /><Icon name="maximize" /><Icon name="float" /></HeaderIcons>
    </PanelHeader>
    <PanelTools>
      <Spacer />
      <PanelTool $last aria-label="Schematic settings"><Icon name="gear" /></PanelTool>
    </PanelTools>
    <Canvas>
      <svg width="244" height="466" fontSize="15">
        <g fill="none" stroke="#1db100">
          <path d="M0 10.500H84.500V155.500H0M0 52.500H43.500V197.500H0M0 135.500H22.500V300.500H0" />
          <path d="M0 217.500H106M0 238.500H106M0 383.500H106" />
        </g>
        <path d="M0 31.500H63.500V176.500H0" fill="none" stroke="#008000" strokeWidth="3" />
        <g fill="#fff" stroke="#000">
          <path d="M105.500 210.500h14l8.500 7-8.500 7h-14z" />
          <path d="M106 238.500l6.500-7h10l7 7-7 7h-10z" />
          <path d="M105.500 376.500h14l8.500 7-8.500 7h-14z" />
        </g>
        <text x="138" y="222">iic_scl</text>
        <text x="140" y="243">iic_sda</text>
        <text x="138" y="388">led</text>
      </svg>
    </Canvas>
  </Panel>
);

const RunsPanel = () => (
  <Panel $fill>
    <PanelHeader>
      <PanelTabs>
        <PanelTab>Tcl Console</PanelTab>
        <PanelTab>Messages</PanelTab>
        <PanelTab>Log</PanelTab>
        <PanelTab>Reports</PanelTab>
      </PanelTabs>
      <HeaderIcons>
        <Icon name="help" /><Icon name="minimize" /><Icon name="maximize" /><Icon name="float" />
      </HeaderIcons>
    </PanelHeader>
    <PanelTools>
      {["search", "collapse", "expand", "first", "back", "play", "forward", "plus"].map((n) => (
        <PanelTool key={n} aria-label={n} $off={["first", "back", "play", "forward"].includes(n)}>
          <Icon name={n} />
        </PanelTool>
      ))}
    </PanelTools>
    <RunsArea>
      <RunsTable>
        <colgroup>
          {columns.map(([, w], n) => <col key={n} width={w || undefined} />)}
        </colgroup>
        <thead>
          <tr>{columns.map(([t], n) => <HeadCell key={n}>{t}</HeadCell>)}</tr>
        </thead>
        <tbody>
          {runs.map((r) => (
            <tr key={r.name}>
              <Cell>
                <RunName $indent={r.indent}>
                  {r.icons.map((i) => <Icon key={i} name={i} />)}
                  <RunText>{r.name}</RunText>
                </RunName>
              </Cell>
              {r.cells.map((c, n) => (
                <Cell key={n} $num={n > 1 && n < 16}>{c}</Cell>
              ))}
            </tr>
          ))}
        </tbody>
      </RunsTable>
    </RunsArea>
    <Scrollbar share={61} />
  </Panel>
);

const VivadoLogo = () => (
  <svg width="152" height="64" fill="#58595b" role="img" aria-label="Vivado HLx Editions">
    <text x="0" y="46" fontFamily="Lato" fontSize="32" fontWeight="300">VIVADO</text>
    <circle cx="119" cy="45" r="1" />
    <text x="46" y="62" fontFamily="Liberation Sans" fontSize="12">
      HL<tspan fontFamily="Liberation Serif" fontStyle="italic" fontSize="14">x</tspan> Editions
    </text>
    <path fill="#d3dd2c" d="M127 2 137 8l3 14-10-7z" />
    <path fill="#80850a" d="M129 13v12l-9 7V21z" />
    <path fill="#e3ea80" d="m129 24 10-5 11 4-10 6z" />
  </svg>
);

const XilinxLogo = () => (
  <svg width="156" height="40" role="img" aria-label="Xilinx">
    <path fill="#ed1c24" d="M6 4h9l-5 7H0zM16 4h12l-6 7zM6 18h9l-5 7H0z" />
    <path fill="#9b1b21" d="M0 11h10l5 7H6zM0 25h10l5 7H6zM22 25l6 7H16z" />
    <text x="40" y="32" fontFamily="Lato" fontSize="35" fill="#383838">XILINX</text>
    <text x="145" y="33" fontFamily="Liberation Sans" fontSize="8" fill="#383838">®</text>
  </svg>
);

const AddSourcesDialog = () => (
  <Dialog role="dialog" aria-label="Add Sources">
    <DialogTitle>
      <Icon name="vivado" size={20} />
      <TitleText>Add Sources</TitleText>
      <Icon name="thinClose" />
    </DialogTitle>
    <DialogBody>
      <Branding>
        <VivadoLogo />
        <XilinxLogo />
      </Branding>
      <Steps>
        <StepsTitle>Add Sources</StepsTitle>
        <Intro>This guides you through the process of adding and creating sources for your project</Intro>
        <Choices>
          <Choice><Radio type="radio" name="kind" defaultChecked /><span>Add or <Key>c</Key>reate constraints</span></Choice>
          <Choice><Radio type="radio" name="kind" /><span><Key>A</Key>dd or create design sources</span></Choice>
          <Choice><Radio type="radio" name="kind" /><span>Add or create <Key>s</Key>imulation sources</span></Choice>
        </Choices>
      </Steps>
    </DialogBody>
    <DialogFooter>
      <HelpButton aria-label="Help"><Icon name="help" size={14} /></HelpButton>
      <Action disabled>&lt; <Key>B</Key>ack</Action>
      <Action $primary><Key>N</Key>ext &gt;</Action>
      <Action disabled><Key>F</Key>inish</Action>
      <Action $strong>Cancel</Action>
    </DialogFooter>
  </Dialog>
);

const InputMethodBar = () => (
  <ImeBar>
    <svg width="28" height="28" viewBox="0 0 28 28">
      <path d="M1 5 22 0l6 22-20 6-4-1z" fill="#f4511e" />
      <path d="M22 6 9 8l-1 5 13-1-1 8-12 2" fill="none" stroke="#fff" strokeWidth="3" />
    </svg>
    英
    <svg width="16" height="16" fill="currentColor"><path d="M12 1c5 7-1 16-11 12 7-1 10-5 11-12z" /></svg>
    <svg width="16" height="16" fill="currentColor"><circle cx="4" cy="4" r="2.500" /><path d="M9 5h5c1 5-1 7-4 8 2-3 1-4-1-5z" /></svg>
    <svg width="18" height="16" fill="none" stroke="currentColor" strokeWidth="2"><path d="M1 3h16v10H1zM4 6h10M4 10h10" /></svg>
    <svg width="16" height="16" fill="#8fb4e0"><circle cx="7" cy="5" r="3" /><path d="M1 14c1-7 11-7 12 0z" /></svg>
    <svg width="17" height="16" fill="currentColor"><path d="M5 1h7l5 3-2 4-2-1v8H4V7L2 8 0 4z" /></svg>
    <svg width="16" height="16" fill="none" stroke="currentColor" strokeWidth="3"><path d="M2 14 9 7M14 5c-1 3-6 4-6 0 0-2 2-3 4-3" /></svg>
  </ImeBar>
);

export default function App() {
  return (
    <Window>
      <GlobalStyle />
      <TitleBar>
        <Icon name="vivado" size={20} />
        <TitleText>e2prom_top - [E:/FPGA_Learn/FPGA/Day1128/e2prom_top/e2prom_top.xpr] - Vivado 2018.3</TitleText>
        <WindowButtons>
          <Icon name="thinMin" /><Icon name="restore" /><Icon name="thinClose" />
        </WindowButtons>
      </TitleBar>
      <Chrome>
        <ChromeColumn>
          <MenuBar>
            {menus.map(([a, k, b]) => <MenuButton key={a + k + b}>{a}<Key>{k}</Key>{b}</MenuButton>)}
            <QuickAccess>
              <QuickBox>
                <Icon name="search" size={14} tone="#999" />
                <QuickInput aria-label="Quick Access" defaultValue="Quick Access" />
              </QuickBox>
            </QuickAccess>
          </MenuBar>
          <ToolBar>
            {tools.map((t) => (
              <Tool key={t.name} aria-label={t.name} $tone={t.tone} $menu={t.menu} $tight={t.tight}>
                <Icon name={t.name} />
              </Tool>
            ))}
          </ToolBar>
        </ChromeColumn>
        <ChromeColumn>
          <RunStatus>Synthesis Complete <Icon name="check" /></RunStatus>
          <LayoutPicker>
            <Icon name="layout" />
            <LayoutSelect aria-label="Layout"><option>Default Layout</option></LayoutSelect>
            <Icon name="downBold" tone="#6e6e6e" size={14} />
          </LayoutPicker>
        </ChromeColumn>
      </Chrome>
      <Workspace>
        <FlowNavigator />
        <Main>
          <DesignBar>
            <DesignName><b>ELABORATED DESIGN</b> - xc7z020clg400-2 &nbsp;<Muted>(active)</Muted></DesignName>
            <Icon name="help" tone="#808080" />
            <Icon name="close" tone="#808080" />
          </DesignBar>
          <Panes>
            <UpperPanes>
              <SourcesPanel />
              <SchematicPanel />
              <PropertiesPanel />
            </UpperPanes>
            <RunsPanel />
          </Panes>
        </Main>
      </Workspace>
      <StatusBar>指定和/或创建源文件添加到工程</StatusBar>
      <AddSourcesDialog />
      <Arrows width="1920" height="1030" fill={color.note} aria-hidden="true">
        <path d="M267 292 418 227 415 222 436 223 426 237 422 232z" />
        <path d="M1287 376 1080 305 1078 310 1066 297 1084 295 1082 299z" />
        <path d="M1239 633 1354 775 1351 778 1368 784 1364 767 1360 770z" />
      </Arrows>
      <Note $x={180} $y={301}>1、添加</Note>
      <Note $x={1298} $y={365}>2、选择</Note>
      <Note $x={1161} $y={581}>3、点击Next</Note>
      <InputMethodBar />
      <Watermark>CSDN @鲁棒最小二乘支持向量机</Watermark>
    </Window>
  );
}
